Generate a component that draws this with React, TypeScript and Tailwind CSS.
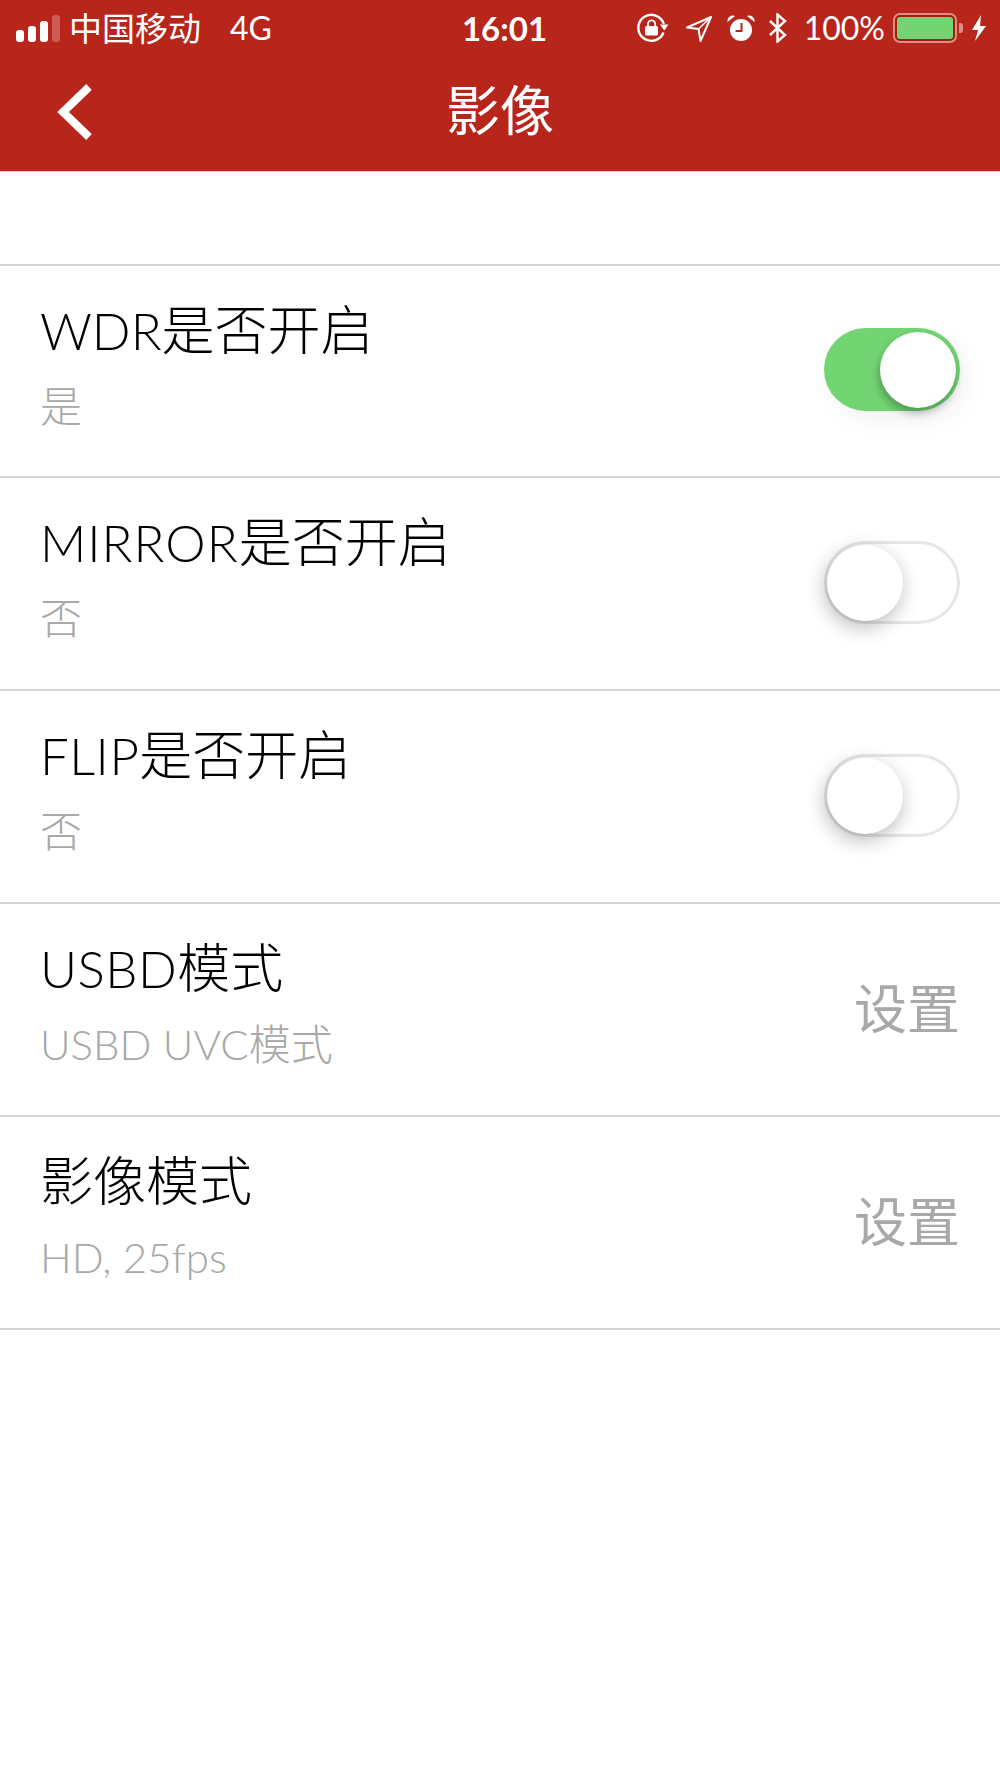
function Signal() {
  return (
    <div className="flex items-end gap-1 h-[28px] w-[44px]">
      <div className="w-2 h-3 rounded-[3px] bg-white" />
      <div className="w-2 h-4 rounded-[3px] bg-white" />
      <div className="w-2 h-[21px] rounded-[3px] bg-white" />
      <div className="w-2 h-[27px] rounded-[3px] bg-white/25" />
    </div>
  );
}

function RotationLock() {
  return (
    <svg width="32" height="30" viewBox="0 0 32 30" fill="none">
      <path d="M26.5 19.5A13 13 0 1 1 26.8 11" stroke="#fff" strokeWidth="2.4" />
      <path d="M23 11.5h8.5l-4.2 6z" fill="#fff" />
      <rect x="8" y="13" width="13" height="9.5" rx="1.5" fill="#fff" />
      <path d="M11 13.5v-2.5a3.6 3.6 0 0 1 7.2 0v2.5" stroke="#fff" strokeWidth="1.8" />
    </svg>
  );
}

function LocationArrow() {
  return (
    <svg width="26" height="28" viewBox="0 0 26 28" fill="none">
      <path d="M25 3L1 13.5l11.5 1.5 2 12z" stroke="#fff" strokeWidth="2" strokeLinejoin="round" />
      <path d="M25 3L12.5 15" stroke="#fff" strokeWidth="1.5" />
    </svg>
  );
}

function Alarm() {
  return (
    <svg width="28" height="28" viewBox="0 0 28 28" fill="none">
      <circle cx="14" cy="16" r="11" fill="#fff" />
      <path d="M0.5 8A5.5 5.5 0 0 1 8 2zM27.5 8A5.5 5.5 0 0 0 20 2z" fill="#fff" />
      <path d="M14.5 9v8H8.5" stroke="#b8251a" strokeWidth="2" />
    </svg>
  );
}

function Bluetooth() {
  return (
    <svg width="20" height="30" viewBox="0 0 20 30" fill="none">
      <path d="M2 8l15 14-7.5 6.5v-27L17 8 2 22" stroke="#fff" strokeWidth="2.4" />
    </svg>
  );
}

function Battery() {
  return (
    <div className="flex items-center gap-[2px]">
      <div className="w-[64px] h-[30px] rounded-[7px] border-[2px] border-[#dc8d86] bg-[#a81a12] p-[2px]">
        <div className="w-full h-full rounded-[3px] bg-[#72d572]" />
      </div>
      <div className="w-[4px] h-[10px] rounded-r-[3px] bg-[#dc8d86]" />
    </div>
  );
}

function Bolt() {
  return (
    <svg width="16" height="26" viewBox="0 0 16 26">
      <path d="M10 0L1 15h6L4 26l11-15H9z" fill="#fff" />
    </svg>
  );
}

function Toggle({ on }: { on: boolean }) {
  if (on) {
    return (
      <div className="w-[136px] h-[83px] rounded-full bg-[#72d572] flex items-center justify-end pr-[4px] shadow-[8px_10px_24px_rgba(0,0,0,0.05)]">
        <div className="w-[76px] h-[76px] rounded-full bg-white shadow-[-1px_5px_10px_rgba(0,0,0,0.3)]" />
      </div>
    );
  }
  return (
    <div className="w-[136px] h-[83px] rounded-full border-[3px] border-[#e6e6e6] bg-white flex items-center">
      <div className="w-[76px] h-[76px] rounded-full bg-white shadow-[-2px_6px_20px_rgba(0,0,0,0.28)]" />
    </div>
  );
}

type Row = { latin: string; spacing: string; title: string; sub: string; toggle?: boolean };

const rows: Row[] = [
  { latin: 'WDR', spacing: 'tracking-normal', title: '是否开启', sub: '是', toggle: true },
  { latin: 'MIRROR', spacing: 'tracking-[1px]', title: '是否开启', sub: '否', toggle: false },
  { latin: 'FLIP', spacing: 'tracking-[0.5px]', title: '是否开启', sub: '否', toggle: false },
  { latin: 'USBD', spacing: 'tracking-[0.5px]', title: '模式', sub: 'USBD UVC模式' },
  { latin: '', spacing: 'tracking-normal', title: '影像模式', sub: 'HD, 25fps' },
];

export default function App() {
  return (
    <div className="w-[1000px] min-h-[1778px] bg-white font-['Lato','Noto_Sans_CJK_SC',sans-serif]">
      {/* Status bar */}
      <div className="bg-[#b8251a] text-white">
        <div className="h-[56px] pl-4 pr-[13px] grid grid-cols-[1fr_auto_1fr] items-center">
          <div className="flex items-center">
            <Signal />
            <span className="ml-[9px] text-[33px] leading-none">中国移动</span>
            <span className="ml-[29px] text-[32px] leading-none">4G</span>
          </div>
          <span className="ml-[6px] text-[33px] leading-none font-bold">16:01</span>
          <div className="flex items-center justify-end">
            <RotationLock />
            <div className="ml-[17px]"><LocationArrow /></div>
            <div className="ml-[15px]"><Alarm /></div>
            <div className="ml-[13px]"><Bluetooth /></div>
            <span className="ml-[16px] text-[32px] leading-none">100%</span>
            <div className="ml-[8px] flex items-center gap-[8px]">
              <Battery />
              <Bolt />
            </div>
          </div>
        </div>

        {/* Nav bar */}
        <div className="h-[115px] flex items-center relative">
          <svg className="ml-[55px]" width="42" height="64" viewBox="0 0 42 64" fill="none">
            <path d="M34 5L8 30l26 25" stroke="#fff" strokeWidth="8" />
          </svg>
          <span className="absolute left-0 right-0 text-center text-[54px] leading-none pb-[6px]">影像</span>
        </div>
      </div>
      <div className="h-[93px] border-t border-[#d8d8d8]" />

      {/* Settings list */}
      <div className="border-t-2 border-[#d6d6da]">
        {rows.map((row) => (
          <div key={row.latin + row.title} className="h-[213px] first:h-[212px] border-b-2 border-[#d6d6da] px-10 flex items-start justify-between">
            <div>
              <div className="mt-[34px] h-[60px] text-black whitespace-nowrap">
                <span className={`text-[51px] leading-[60px] font-light ${row.spacing}`}>{row.latin}</span>
                <span className="text-[53px] leading-[60px] font-light">{row.title}</span>
              </div>
              <div className="mt-[26px] text-[42px] leading-[40px] font-light text-[#a8a8a8]">{row.sub}</div>
            </div>
            {row.toggle !== undefined ? (
              <div className={row.toggle ? 'mt-[62px]' : 'mt-[63px]'}>
                <Toggle on={row.toggle} />
              </div>
            ) : (
              <div className="mt-[79px] text-[53px] leading-[52px] text-[#a8a8a8]">设置</div>
            )}
          </div>
        ))}
      </div>
    </div>
  );
}
